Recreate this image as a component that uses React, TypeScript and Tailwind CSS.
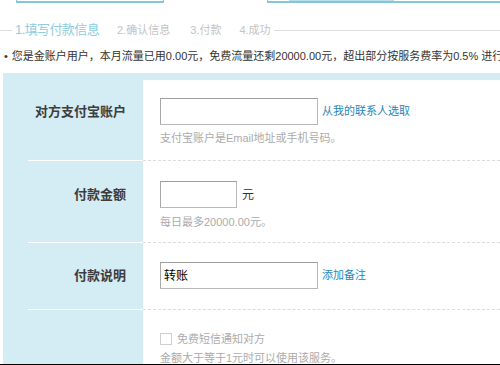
import React from 'react';

const font = "font-['Liberation_Sans','Noto_Sans_CJK_SC',sans-serif]";

interface RowProps {
    label?: string;
    height: string;
    pad: string;
    last?: boolean;
    children: React.ReactNode;
}

const Row: React.FC<RowProps> = ({ label, height, pad, last, children }) => (
    <div className={`flex ${height}`}>
        <div className="w-[140px] pl-[25px] flex">
            <div className={`flex-1 pr-[17px] ${pad} ${last ? '' : 'border-b border-white'}`}>
                {label && (
                    <div className="h-[27px] flex items-center justify-end text-[13px] font-bold text-[#3d3d3d]">
                        {label}
                    </div>
                )}
            </div>
        </div>
        <div className={`flex-1 bg-white pl-[17px] ${pad} ${last ? '' : 'border-b border-dashed border-[#dcdcdc]'}`}>
            {children}
        </div>
    </div>
);

const inputCls = 'h-[27px] border border-[#b8b8b8] border-t-[#9c9c9c] border-l-[#a8a8a8] bg-white';

export default function App() {
    return (
        <div className={`w-[500px] h-[365px] overflow-hidden bg-white border-b border-black ${font}`}>
            {/* tabs above, only bottom edges visible */}
            <div className="flex h-[3px]">
                <div className="ml-[16px] w-[148px] border-x border-b-2 border-[#86c4da]" />
                <div className="ml-[103px] flex-1 flex border-l border-b-2 border-[#86c4da]">
                    <div className="w-[21px]" />
                    <div className="w-[105px] bg-[#b9dfeb]" />
                </div>
            </div>

            {/* steps */}
            <div className="mt-[17px] h-[20px] flex items-center">
                <div className="w-[12px] h-px bg-[#dddddd]" />
                <span className="ml-[3px] text-[13px] tracking-[-0.6px] text-[#8ccde0]">1.填写付款信息</span>
                <span className="ml-[18px] text-[11px] text-[#c4c4c4]">2.确认信息</span>
                <span className="ml-[20px] text-[11px] text-[#c4c4c4]">3.付款</span>
                <span className="ml-[18px] text-[11px] text-[#c4c4c4]">4.成功</span>
                <div className="ml-[3px] flex-1 h-px bg-[#dddddd]" />
            </div>

            {/* notice */}
            <div className="mt-[8px] h-[16px] flex items-center pl-[4px] text-[11px] text-[#333] whitespace-nowrap">
                <span className="mr-[4px]">•</span>
                您是金账户用户，本月流量已用0.00元，免费流量还剩20000.00元，超出部分按服务费率为0.5% 进行
            </div>

            {/* form */}
            <div className="mt-[9px] ml-[3px] bg-[#d4ecf3] pt-[7px]">
                <Row label="对方支付宝账户" height="h-[81px]" pad="pt-[18px]">
                    <div className="flex items-center">
                        <div className={`${inputCls} w-[158px]`} />
                        <span className="ml-[4px] text-[11px] text-[#2586b8]">从我的联系人选取</span>
                    </div>
                    <div className="mt-[5px] h-[16px] text-[11px] text-[#ababab]">支付宝账户是Email地址或手机号码。</div>
                </Row>
                <Row label="付款金额" height="h-[82px]" pad="pt-[20px]">
                    <div className="flex items-center">
                        <div className={`${inputCls} w-[77px]`} />
                        <span className="ml-[5px] text-[12px] text-[#333]">元</span>
                    </div>
                    <div className="mt-[6px] h-[16px] text-[11px] text-[#ababab]">每日最多20000.00元。</div>
                </Row>
                <Row label="付款说明" height="h-[67px]" pad="pt-[19px]">
                    <div className="flex items-center">
                        <div className={`${inputCls} w-[158px] flex items-center pl-[3px] text-[12px] text-black`}>转账</div>
                        <span className="ml-[4px] text-[11px] text-[#2586b8]">添加备注</span>
                    </div>
                </Row>
                <Row height="h-[80px]" pad="pt-[23px]" last>
                    <div className="flex items-center h-[12px]">
                        <div className="w-[12px] h-[12px] border border-[#cfcfcf] bg-white" />
                        <span className="ml-[5px] text-[11px] text-[#ababab]">免费短信通知对方</span>
                    </div>
                    <div className="mt-[5px] h-[16px] text-[11px] text-[#ababab]">金额大于等于1元时可以使用该服务。</div>
                </Row>
            </div>
        </div>
    );
}
